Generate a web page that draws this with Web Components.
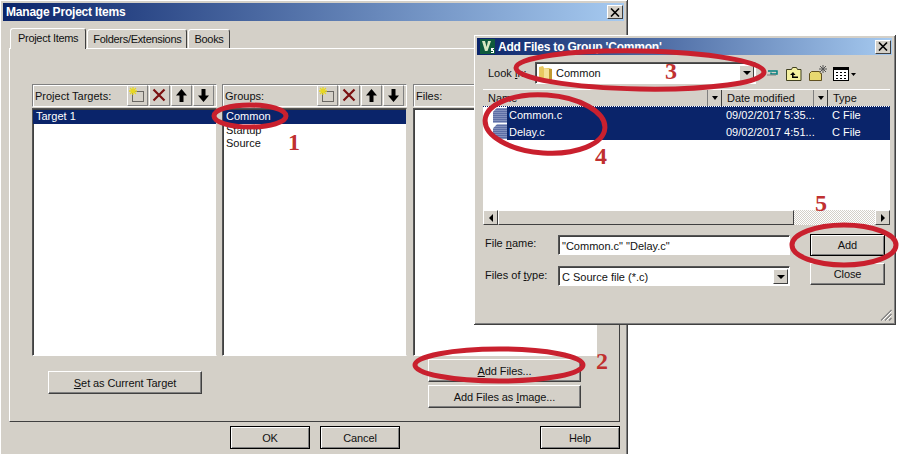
<!DOCTYPE html>
<html>
<head>
<meta charset="utf-8">
<title>Manage Project Items</title>
<style>
    html, body { margin: 0; padding: 0; background: #fff; }
    body { width: 901px; height: 454px; overflow: hidden; position: relative; font: 11px "Liberation Sans", sans-serif; color: #111; }
    u { text-decoration: underline; }
</style>
</head>
<body>
<template id="btn-tpl">
    <style>
        :host {
            display: flex; align-items: center; justify-content: center; box-sizing: border-box;
            width: var(--w, 80px); height: var(--h, 23px);
            background: #d4d0c8; color: #111; font-size: 11px; letter-spacing: -.1px;
            border: 1px solid; border-color: #fff #404040 #404040 #fff;
            box-shadow: inset -1px -1px 0 #808080;
        }
        :host([framed]) { outline: 1px solid #000; outline-offset: -1px; border-color: #000; box-shadow: inset 1px 1px 0 #fff, inset -1px -1px 0 #808080; }
    </style>
    <slot></slot>
</template>

<template id="win-tpl">
    <style>
        :host { display: flex; flex-direction: column; box-sizing: border-box; position: absolute; background: #d4d0c8; padding: 3px; border-right: 1px solid #404040; border-bottom: 1px solid #404040; box-shadow: inset 1px 1px 0 #fff, inset -1px -1px 0 #808080; }
        .title { flex: none; height: var(--title-h, 18px); display: flex; align-items: center; gap: 3px; padding: 0 1px 0 3px; color: #fff; font: bold 12px "Liberation Sans", sans-serif; letter-spacing: -.2px; background: linear-gradient(90deg, #0a246a, #a6caf0); }
        .text { flex: 1; white-space: nowrap; }
        .close { width: 16px; height: 14px; box-sizing: border-box; background: #d4d0c8; border: 1px solid; border-color: #fff #404040 #404040 #fff; display: flex; align-items: center; justify-content: center; }
        .body { flex: 1; min-height: 0; display: flex; flex-direction: column; position: relative; }
        ::slotted([slot=icon]) { flex: none; }
    </style>
    <div class="title">
        <slot name="icon"></slot>
        <span class="text"></span>
        <span class="close"><svg width="10" height="9" viewBox="0 0 10 9"><path d="M1 .5l8 8M9 .5l-8 8" stroke="#000" stroke-width="1.6"/></svg></span>
    </div>
    <div class="body"><slot></slot></div>
</template>

<template id="tabs-tpl">
    <style>
        :host { display: flex; flex-direction: column; flex: 1; min-height: 0; padding: 6px 4px 6px 6px; }
        .strip { flex: none; height: 21px; display: flex; align-items: flex-end; padding-left: 1px; position: relative; z-index: 1; letter-spacing: -.3px; }
        .tab { height: 18px; padding: 0 5px; display: flex; align-items: center; white-space: nowrap; background: #d4d0c8; border: 1px solid; border-bottom: 0; border-color: #fff #404040 #fff #fff; border-radius: 3px 3px 0 0; margin-right: 1px; }
        .tab.on { height: 21px; padding: 3px 7px 0; box-sizing: border-box; margin: 0 1px -1px 0; align-items: flex-start; line-height: 13px; }
        .page { flex: 1; min-height: 0; display: flex; flex-direction: column; box-sizing: border-box; background: #d4d0c8; border: 1px solid; border-color: #fff #404040 #404040 #fff; }
    </style>
    <div class="strip">
        <div class="tab on">Project Items</div>
        <div class="tab">Folders/Extensions</div>
        <div class="tab">Books</div>
    </div>
    <div class="page"><slot></slot></div>
</template>

<template id="panel-tpl">
    <style>
        :host { display: flex; flex-direction: column; width: 185px; flex: none; }
        .head { flex: none; height: 23px; box-sizing: border-box; display: flex; align-items: center; padding-left: 2px; border-top: 1px solid #808080; border-left: 1px solid #808080; border-right: 1px solid #fff; border-bottom: 1px solid #fff; box-shadow: inset 1px 1px 0 #fff; white-space: nowrap; }
        .label { flex: 1; }
        .list { flex: 1; margin-top: 1px; box-sizing: border-box; background: #fff; padding: 1px 0; border: 1px solid; border-color: #555 #d4d0c8 #fff #555; box-shadow: inset 1px 1px 0 #404040; }
        .tools { display: flex; margin-right: 1px; }
        .tools svg { width: 21px; height: 21px; display: block; margin-right: 1px; box-sizing: border-box; border: 1px solid; border-color: #fff #808080 #808080 #fff; }
    </style>
    <div class="head">
        <span class="label"></span>
        <span class="tools"></span>
    </div>
    <div class="list"><slot></slot></div>
</template>

<template id="item-tpl">
    <style>
        :host { display: block; height: 13.5px; line-height: 13px; padding-left: 3px; white-space: nowrap; }
        :host([selected]) { background: #0a246a; color: #fff; }
    </style>
    <slot></slot>
</template>

<template id="combo-tpl">
    <style>
        :host { display: flex; align-items: center; box-sizing: border-box; background: #fff; height: var(--h, 21px); width: var(--w, 220px); flex: none; border: 1px solid; border-color: #555 #fff #fff #555; box-shadow: inset 1px 1px 0 #404040; padding: 2px 1px 1px 3px; white-space: nowrap; }
        .txt { flex: 1; display: flex; align-items: center; gap: 3px; }
        .arrow { flex: none; width: 15px; height: 100%; box-sizing: border-box; background: #d4d0c8; border: 1px solid; border-color: #fff #404040 #404040 #fff; display: flex; align-items: center; justify-content: center; }
        .arrow::after { content: ""; border: 4px solid transparent; border-top: 4px solid #000; border-bottom: 0; }
        :host([plain]) .arrow { display: none; }
        ::slotted(svg) { margin-left: -1px; }
    </style>
    <div class="txt"><slot></slot></div>
    <div class="arrow"></div>
</template>

<template id="list-head-tpl">
    <style>
        :host { display: flex; height: 17px; box-sizing: border-box; background: #d4d0c8; flex: none; white-space: nowrap; border-top: 1px solid #fff; }
        .col { box-sizing: border-box; height: 16px; display: flex; align-items: center; padding-left: 5px; border-right: 1px solid #808080; }
        .drop { width: 14px; height: 16px; box-sizing: border-box; border-right: 1px solid #404040; display: flex; align-items: center; justify-content: center; }
        .drop::after { content: ""; border: 3px solid transparent; border-top: 4px solid #000; border-bottom: 0; }
        .name { width: 225px; }
        .date { width: 92px; }
        .type { flex: 1; border: 0; }
    </style>
    <div class="col name">Name</div><div class="drop"></div>
    <div class="col date">Date modified</div><div class="drop"></div>
    <div class="col type">Type</div>
</template>

<template id="file-tpl">
    <style>
        :host { display: flex; height: 16.5px; align-items: center; color: #fff; white-space: nowrap; box-sizing: border-box; }
        .ic { flex: none; width: 14px; height: 15px; margin: 0 0 0 10px; background: repeating-linear-gradient(#8391bd 0 1px, #5d6ea5 1px 2px); clip-path: polygon(0 4px, 4px 0, 100% 0, 100% 100%, 0 100%); }
        .row { flex: 1; align-self: stretch; display: flex; align-items: center; background: #0a246a; }
        .nm { width: 217px; padding-left: 2px; }
        .dt { width: 106px; }
    </style>
    <div class="ic"></div>
    <div class="row">
        <span class="nm"></span><span class="dt"></span><span class="ty">C File</span>
    </div>
</template>

<template id="scroll-tpl">
    <style>
        :host { display: flex; height: 15px; flex: none; background-color: #fff; background-image: repeating-conic-gradient(#d4d0c8 0 25%, #fff 0 50%); background-size: 2px 2px; }
        .b { box-sizing: border-box; background: #d4d0c8; border: 1px solid; border-color: #fff #404040 #404040 #fff; display: flex; align-items: center; justify-content: center; }
        .arr { width: 15px; flex: none; }
        .thumb { width: 296px; flex: none; }
        .gap { flex: 1; }
        .l::after { content: ""; border: 4px solid transparent; border-right: 4px solid #000; border-left: 0; }
        .r::after { content: ""; border: 4px solid transparent; border-left: 4px solid #000; border-right: 0; }
    </style>
    <div class="b arr l"></div><div class="b thumb"></div><div class="gap"></div><div class="b arr r"></div>
</template>

<template id="marks-tpl">
    <style>
        :host { position: absolute; left: 0; top: 0; width: 901px; height: 454px; display: block; pointer-events: none; }
        svg { position: absolute; left: 0; top: 0; }
        ellipse { fill: none; stroke: #c9202e; stroke-width: 5; }
        span { position: absolute; color: #c03030; font: bold 24px/24px "Liberation Serif", serif; }
    </style>
    <svg width="901" height="454">
        <ellipse cx="250" cy="116" rx="36" ry="11"/>
        <ellipse cx="499" cy="365" rx="84" ry="16"/>
        <ellipse cx="640" cy="70" rx="124" ry="19" transform="rotate(1 640 70)"/>
        <ellipse cx="545" cy="124" rx="60" ry="29" transform="rotate(4 545 124)"/>
        <ellipse cx="844" cy="245" rx="52" ry="20"/>
    </svg>
    <span style="left:288px;top:130px">1</span>
    <span style="left:596px;top:349px">2</span>
    <span style="left:665px;top:59px">3</span>
    <span style="left:595px;top:144px">4</span>
    <span style="left:815px;top:191px">5</span>
</template>

<x-window id="main" heading="Manage Project Items" style="left:0;top:0;width:628px;height:470px;--title-h:18px">
    <x-tabs>
        <div style="display:flex;gap:5px;height:272px;margin:35px 0 0 22px;">
            <x-panel label="Project Targets:">
                <x-item selected>Target 1</x-item>
            </x-panel>
            <x-panel label="Groups:">
                <x-item selected>Common</x-item>
                <x-item>Startup</x-item>
                <x-item>Source</x-item>
            </x-panel>
            <x-panel label="Files:" style="margin-left:1px"></x-panel>
        </div>
        <div style="display:flex;align-items:flex-start;padding:0 38px 0 38px;">
            <x-btn style="--w:154px;--h:23px;margin-top:15px"><span><u>S</u>et as Current Target</span></x-btn>
            <div style="margin-left:auto;display:flex;flex-direction:column;gap:3px;margin-top:3px">
                <x-btn style="--w:153px;--h:23px"><span><u>A</u>dd Files...</span></x-btn>
                <x-btn style="--w:153px;--h:23px"><span>Add Files as <u>I</u>mage...</span></x-btn>
            </div>
        </div>
    </x-tabs>
    <div style="display:flex;padding:0 4px 0 227px;height:38px;flex:none;position:relative;top:-2px">
        <x-btn framed style="--w:80px;--h:23px">OK</x-btn>
        <x-btn framed style="--w:80px;--h:23px;margin-left:10px">Cancel</x-btn>
        <x-btn framed style="--w:80px;--h:23px;margin-left:auto">Help</x-btn>
    </div>
</x-window>

<x-window id="add" heading="Add Files to Group 'Common'" style="left:474px;top:35px;width:422px;height:290px;--title-h:17px">
    <svg slot="icon" width="15" height="15" viewBox="0 0 15 15"><rect width="15" height="15" fill="#0e5a3c"/><path d="M2 2h3l1.600 6L8 2h3L7.500 12h-2.500z" fill="#d8e8c0"/><path d="M12 9h2v1h-1v1h1v3h-3v-1h2v-1h-2v-3z" fill="#fff"/></svg>
    <div style="display:flex;flex-direction:column;flex:1;padding:6px 0 0 6px;position:relative;">
        <div style="display:flex;align-items:center;height:23px;flex:none">
            <span style="width:52px;padding-left:5px;box-sizing:border-box">Look <u>i</u>n:</span>
            <x-combo style="--w:221px;--h:22px">
                <svg width="15" height="17" viewBox="0 0 15 17"><path d="M1 2l4-1 1 2 5 0 3 1v12H3l-2-1z" fill="#e8c860"/><path d="M6 3l5 1v12H6z" fill="#f4e098"/><path d="M11 4l3 0v12h-3z" fill="#c09a30"/></svg>
                <span>Common</span>
            </x-combo>
            <svg width="120" height="18" viewBox="0 0 120 18" style="margin-left:6px;flex:none">
                <path d="M6 7h9v3H9V8.500" fill="none" stroke="#008080" stroke-width="1.500"/>
                <path d="M5 11h9" stroke="#808080"/>
                <path d="M24.500 5.500h5l1-2h4l1 2h3.500v11h-14.500z" fill="#f4f0a0" stroke="#404020"/>
                <path d="M31 8l-3 3h2v3h6v-1.500h-4.500V11h2z" fill="#000"/>
                <path d="M47.500 9.500l2-2h8l1 2h1v7h-12z" fill="#e8d870" stroke="#605020"/>
                <path d="M61 1v8M57 5h8M58 2l6 6M64 2l-6 6" stroke="#555" stroke-width="1"/>
                <rect x="71.500" y="3.500" width="15" height="13" fill="#fff" stroke="#000"/>
                <path d="M72 4h14v2H72z" fill="#000"/>
                <path d="M74 8h2v1h-2zM78 8h2v1h-2zM82 8h2v1h-2zM74 11h2v1h-2zM78 11h2v1h-2zM82 11h2v1h-2zM74 14h2v1h-2zM78 14h2v1h-2zM82 14h2v1h-2z" fill="#000"/>
                <path d="M89 9h5l-2.500 3z" fill="#000"/>
            </svg>
        </div>
        <x-list-head style="width:407px;margin-top:5px"></x-list-head>
        <div style="width:407px;height:104px;flex:none;background:#fff;border-top:1px dotted #0a246a;box-sizing:border-box;">
            <x-file name="Common.c" date="09/02/2017 5:35..."></x-file>
            <x-file name="Delay.c" date="09/02/2017 4:51..."></x-file>
        </div>
        <x-scroll style="width:407px"></x-scroll>
        <div style="display:grid;grid-template-columns:75px 232px 75px;column-gap:0;margin-top:9px;align-items:start">
            <span style="padding:3px 0 0 2px">File <u>n</u>ame:</span>
            <x-combo plain style="--w:232px;--h:20px;margin-top:1px">"Common.c" "Delay.c"</x-combo>
            <x-btn framed style="--w:75px;--h:22px;margin-left:20px">Add</x-btn>
            <span style="padding:6px 0 0 2px;margin-top:7px">Files of <u>t</u>ype:</span>
            <x-combo style="--w:232px;--h:20px;margin-top:10px">C Source file (*.c)</x-combo>
            <x-btn style="--w:75px;--h:22px;margin:7px 0 0 20px">Close</x-btn>
        </div>
        <svg width="12" height="12" viewBox="0 0 12 12" style="position:absolute;right:0;bottom:0"><path d="M11.500 1L1 11.500M11.500 5L5 11.500M11.500 9L9 11.500" stroke="#808080" stroke-width="1.200"/><path d="M11.500 2.500L2.500 11.500M11.500 6.500L6.500 11.500" stroke="#fff"/></svg>
    </div>
</x-window>

<x-marks></x-marks>

<script>
    // every element here just clones its template; a few fill in texts from attributes
    function tpl(id) {
        return document.getElementById(id).content.cloneNode(true);
    }

    class Plain extends HTMLElement {
        constructor() {
            super();
            this.attachShadow({ mode: 'open' }).appendChild(tpl(this.constructor.tplId));
        }
    }

    class XBtn extends Plain { static tplId = 'btn-tpl'; }
    class XTabs extends Plain { static tplId = 'tabs-tpl'; }
    class XItem extends Plain { static tplId = 'item-tpl'; }
    class XCombo extends Plain { static tplId = 'combo-tpl'; }
    class XListHead extends Plain { static tplId = 'list-head-tpl'; }
    class XScroll extends Plain { static tplId = 'scroll-tpl'; }
    class XMarks extends Plain { static tplId = 'marks-tpl'; }

    class XWindow extends Plain {
        static tplId = 'win-tpl';
        connectedCallback() {
            this.shadowRoot.querySelector('.text').textContent = this.getAttribute('heading');
        }
    }

    class XFile extends Plain {
        static tplId = 'file-tpl';
        connectedCallback() {
            this.shadowRoot.querySelector('.nm').textContent = this.getAttribute('name');
            this.shadowRoot.querySelector('.dt').textContent = this.getAttribute('date');
        }
    }

    const TOOLS = `
        <svg viewBox="0 0 19 19"><rect x="4.500" y="5.500" width="11" height="10" fill="none" stroke="#000" stroke-dasharray="1 1"/><path d="M5 1v8M1 5h8M2 2l6 6M8 2l-6 6" stroke="#e8d820" stroke-width="1.300"/></svg>
        <svg viewBox="0 0 19 19"><path d="M3.500 3.500l11 11M14.500 3.500l-11 11" stroke="#7a1010" stroke-width="2.200"/></svg>
        <svg viewBox="0 0 19 19"><path d="M9.500 3L4 9.500h3.500V16h4V9.500H15z" fill="#000"/></svg>
        <svg viewBox="0 0 19 19"><path d="M9.500 16L4 9.500h3.500V3h4v6.500H15z" fill="#000"/></svg>`;

    class XPanel extends Plain {
        static tplId = 'panel-tpl';
        connectedCallback() {
            this.shadowRoot.querySelector('.label').textContent = this.getAttribute('label');
            if (this.getAttribute('label') !== 'Files:') {
                this.shadowRoot.querySelector('.tools').innerHTML = TOOLS;
            }
        }
    }

    customElements.define('x-btn', XBtn);
    customElements.define('x-tabs', XTabs);
    customElements.define('x-item', XItem);
    customElements.define('x-combo', XCombo);
    customElements.define('x-list-head', XListHead);
    customElements.define('x-scroll', XScroll);
    customElements.define('x-marks', XMarks);
    customElements.define('x-window', XWindow);
    customElements.define('x-file', XFile);
    customElements.define('x-panel', XPanel);
</script>
</body>
</html>
